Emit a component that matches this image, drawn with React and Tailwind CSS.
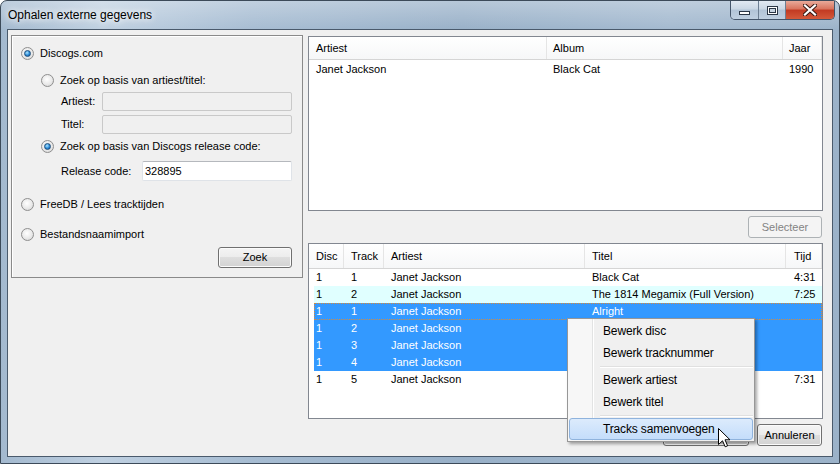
import React from "react";

function Radio({ checked }) {
  return (
    <span className="flex h-[13px] w-[13px] shrink-0 items-center justify-center rounded-full border border-[#8f8f8f] bg-[radial-gradient(circle_at_45%_40%,#ffffff,#e9e9e9_55%,#cdcdcd)]">
      {checked && (
        <span className="h-[7px] w-[7px] rounded-full border border-[#1d4e7c] bg-[radial-gradient(circle_at_40%_35%,#aee6ff,#2a8ad8_55%,#0f4f8c)]" />
      )}
    </span>
  );
}

function WinButton({ children, disabled, className = "" }) {
  return (
    <div
      className={`flex items-center justify-center rounded-[3px] border ${
        disabled
          ? "border-[#adb2b5] bg-[#f4f4f4] text-[#838383]"
          : "border-[#707070] bg-[linear-gradient(#f4f4f4,#ececec_50%,#dedede_50%,#d2d2d2)] text-black shadow-[inset_0_0_0_1px_#fbfbfb]"
      } ${className}`}
    >
      {children}
    </div>
  );
}

const tracks = [
  { disc: "1", track: "1", artist: "Janet Jackson", title: "Black Cat", time: "4:31" },
  { disc: "1", track: "2", artist: "Janet Jackson", title: "The 1814 Megamix (Full Version)", time: "7:25", alt: true },
  { disc: "1", track: "1", artist: "Janet Jackson", title: "Alright", time: "", sel: true, focus: true },
  { disc: "1", track: "2", artist: "Janet Jackson", title: "", time: "", sel: true },
  { disc: "1", track: "3", artist: "Janet Jackson", title: "", time: "", sel: true },
  { disc: "1", track: "4", artist: "Janet Jackson", title: "", time: "", sel: true },
  { disc: "1", track: "5", artist: "Janet Jackson", title: "", time: "7:31" },
];

const headCell = "flex h-full items-center border-r border-[#e5e5e5]";

export default function App() {
  return (
    <div className="relative h-[464px] w-[840px] overflow-hidden bg-white font-['Liberation_Sans',Arial,sans-serif] text-[11px] text-black">
      <div className="flex h-full flex-col rounded-t-[7px] border border-[#3c4a59] bg-[linear-gradient(180deg,rgba(255,255,255,0.3),rgba(255,255,255,0)_30px),linear-gradient(90deg,#a3b9cf,#bfd0e1_12%,#a6bcd2_30%,#98b0c8_55%,#a3b9cf_80%,#9bb2c9)]">
        {/* title bar */}
        <div className="flex h-[28px] shrink-0 items-start justify-between">
          <span className="pl-[7px] pt-[7px] text-[12px] leading-[14px] [text-shadow:0_0_6px_#ffffff,0_0_10px_#ffffff]">
            Ophalen externe gegevens
          </span>
          <div className="mr-[4px] flex h-[19px] overflow-hidden rounded-b-[5px] border border-t-0 border-[#44556a]">
            <div className="flex w-[28px] items-start justify-center border-r border-[#6d7f93] bg-[linear-gradient(#e1e9f2,#cad7e4_45%,#b2c4d7_50%,#bfd0e1)]">
              <div className="mt-[10px] h-[4px] w-[11px] border border-[#2b3746] bg-white" />
            </div>
            <div className="flex w-[27px] items-start justify-center border-r border-[#6d7f93] bg-[linear-gradient(#e1e9f2,#cad7e4_45%,#b2c4d7_50%,#bfd0e1)]">
              <div className="mt-[5px] flex h-[9px] w-[11px] items-center justify-center border border-[#2b3746] bg-white">
                <div className="h-[5px] w-[7px] border border-[#2b3746] bg-[#c8d5e2]" />
              </div>
            </div>
            <div className="flex w-[48px] items-center justify-center bg-[linear-gradient(#e9aa9a,#d8735d_45%,#c23a22_50%,#d4593a)]">
              <svg width="14" height="12" viewBox="0 0 14 12">
                <path d="M2 1.5 L12 10.5 M12 1.5 L2 10.5" stroke="#3a1a14" strokeWidth="4.2" strokeLinecap="square" />
                <path d="M2 1.5 L12 10.5 M12 1.5 L2 10.5" stroke="#ffffff" strokeWidth="2.2" strokeLinecap="square" />
              </svg>
            </div>
          </div>
        </div>

        {/* client area */}
        <div className="mx-[6px] mb-[6px] flex flex-1 items-start gap-[5px] border border-[#4a5a6c] bg-[#f0f0f0] pl-[3px] pt-[5px]">
          {/* left group */}
          <div className="flex h-[243px] w-[292px] shrink-0 flex-col border border-[#8a8a8a] pl-[9px] pr-[10px] shadow-[inset_1px_1px_0_#ffffff]">
            <div className="mt-[9px] flex h-[16px] items-center gap-[6px]">
              <Radio checked />
              <span>Discogs.com</span>
            </div>
            <div className="ml-[20px] mt-[11px] flex h-[16px] items-center gap-[6px]">
              <Radio />
              <span>Zoek op basis van artiest/titel:</span>
            </div>
            <div className="mt-[4px] flex items-center pl-[40px]">
              <span className="w-[41px]">Artiest:</span>
              <div className="h-[19px] flex-1 rounded-[2px] border border-[#c9c9c9] bg-[#f0f0f0]" />
            </div>
            <div className="mt-[4px] flex items-center pl-[40px]">
              <span className="w-[41px]">Titel:</span>
              <div className="h-[19px] flex-1 rounded-[2px] border border-[#c9c9c9] bg-[#f0f0f0]" />
            </div>
            <div className="ml-[20px] mt-[4px] flex h-[16px] items-center gap-[6px]">
              <Radio checked />
              <span>Zoek op basis van Discogs release code:</span>
            </div>
            <div className="mt-[7px] flex items-center pl-[40px]">
              <span className="w-[81px]">Release code:</span>
              <div className="flex h-[20px] flex-1 items-center rounded-[2px] border border-[#dfe3e8] border-t-[#b5b8bd] bg-white pl-[2px]">
                328895
              </div>
            </div>
            <div className="mt-[15px] flex h-[16px] items-center gap-[6px]">
              <Radio />
              <span>FreeDB / Lees tracktijden</span>
            </div>
            <div className="mt-[14px] flex h-[16px] items-center gap-[6px]">
              <Radio />
              <span>Bestandsnaamimport</span>
            </div>
            <WinButton className="mt-[5px] h-[21px] w-[74px] self-end">Zoek</WinButton>
          </div>

          {/* right column */}
          <div className="mt-[1px] flex w-[515px] shrink-0 flex-col">
            <div className="h-[175px] border border-[#828790] bg-white">
              <div className="flex h-[23px] items-center border-b border-[#d5d5d5] bg-[linear-gradient(#ffffff,#f6f7f8)]">
                <div className={`${headCell} w-[238px] pl-[7px]`}>Artiest</div>
                <div className={`${headCell} w-[236px] pl-[6px]`}>Album</div>
                <div className={`${headCell} flex-1 pl-[6px]`}>Jaar</div>
              </div>
              <div className="ml-[5px] mt-[1px] flex h-[17px] items-center">
                <span className="w-[233px] pl-[2px]">Janet Jackson</span>
                <span className="w-[236px] pl-[6px]">Black Cat</span>
                <span className="flex-1 pl-[6px]">1990</span>
              </div>
            </div>

            <WinButton disabled className="mr-[1px] mt-[5px] h-[22px] w-[74px] self-end">
              Selecteer
            </WinButton>

            <div className="mt-[5px] h-[176px] border border-[#828790] bg-white">
              <div className="flex h-[25px] items-center border-b border-[#d5d5d5] bg-[linear-gradient(#ffffff,#f6f7f8)]">
                <div className={`${headCell} w-[35px] pl-[7px]`}>Disc</div>
                <div className={`${headCell} w-[40px] pl-[7px]`}>Track</div>
                <div className={`${headCell} w-[201px] pl-[7px]`}>Artiest</div>
                <div className={`${headCell} w-[201px] pl-[7px]`}>Titel</div>
                <div className={`${headCell} flex-1 pl-[8px]`}>Tijd</div>
              </div>
              <div className="flex flex-col">
                {tracks.map((t, i) => (
                  <div
                    key={i}
                    className={`ml-[5px] flex h-[17px] items-center ${
                      t.sel ? "bg-[#3399ff] text-white" : t.alt ? "bg-[#e0ffff]" : ""
                    } ${t.focus ? "outline-1 -outline-offset-1 outline-dotted outline-[#d88a3a]" : ""}`}
                  >
                    <span className="w-[30px] pl-[2px]">{t.disc}</span>
                    <span className="w-[40px] pl-[7px]">{t.track}</span>
                    <span className="w-[201px] pl-[7px]">{t.artist}</span>
                    <span className="w-[201px] pl-[7px]">{t.title}</span>
                    <span className="flex-1 pl-[8px]">{t.time}</span>
                  </div>
                ))}
              </div>
            </div>

            <div className="mr-[1px] mt-[5px] flex justify-end gap-[8px]">
              <WinButton className="h-[22px] w-[86px]">OK</WinButton>
              <WinButton className="h-[22px] w-[65px]">Annuleren</WinButton>
            </div>
          </div>
        </div>
      </div>

      {/* context menu */}
      <div className="absolute left-[567px] top-[318px] w-[188px] border border-[#979797] bg-[#f0f0f0] pb-[1px] pt-[1px] text-[12px] tracking-[-0.15px] shadow-[2px_2px_3px_rgba(0,0,0,0.35)]">
        <div className="absolute bottom-0 left-0 top-0 w-[25px] border-r border-[#e2e3e3] bg-[#f7f7f7] shadow-[1px_0_0_#ffffff]" />
        <div className="relative flex h-[22px] items-center pl-[35px]">Bewerk disc</div>
        <div className="relative flex h-[22px] items-center pl-[35px]">Bewerk tracknummer</div>
        <div className="relative ml-[32px] mr-[1px] flex h-[5px] flex-col justify-center">
          <div className="h-[1px] bg-[#e0e0e0]" />
          <div className="h-[1px] bg-white" />
        </div>
        <div className="relative flex h-[22px] items-center pl-[35px]">Bewerk artiest</div>
        <div className="relative flex h-[22px] items-center pl-[35px]">Bewerk titel</div>
        <div className="relative ml-[32px] mr-[1px] flex h-[5px] flex-col justify-center">
          <div className="h-[1px] bg-[#e0e0e0]" />
          <div className="h-[1px] bg-white" />
        </div>
        <div className="relative mx-[1px] flex h-[22px] items-center rounded-[3px] border border-[#8fb3dd] bg-[linear-gradient(#dcebfc,#c4ddfb)] pl-[33px]">
          Tracks samenvoegen
        </div>
      </div>

      {/* mouse cursor */}
      <svg className="absolute left-[718px] top-[428px]" width="13" height="20" viewBox="0 0 13 20">
        <path d="M0.5 0.5 L0.5 16.5 L4.5 12.8 L7.2 18.8 L9.6 17.8 L7 11.8 L12 11.8 Z" fill="#ffffff" stroke="#000000" strokeWidth="1" strokeLinejoin="miter" />
      </svg>
    </div>
  );
}
